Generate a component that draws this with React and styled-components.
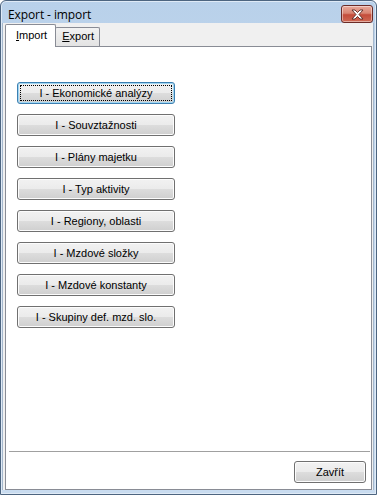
import React from 'react';
import styled, { createGlobalStyle } from 'styled-components';

const GlobalStyle = createGlobalStyle`
  html, body {
    margin: 0;
    padding: 0;
    background: #ffffff;
  }
  * {
    box-sizing: border-box;
  }
`;

const Window = styled.div`
  width: 377px;
  height: 495px;
  display: flex;
  flex-direction: column;
  border: 1px solid #4d6580;
  border-radius: 6px 6px 0 0;
  background: linear-gradient(to bottom, #b9d1ea 0%, #c4d8ee 40%, #c9dcf0 100%);
  padding: 0 2px 4px 1px;
  box-shadow: inset 0 0 0 1px #dfeaf6;
`;

const TitleBar = styled.div`
  height: 22px;
  display: flex;
  align-items: flex-start;
  padding-left: 6px;
  flex-shrink: 0;
`;

const Title = styled.div`
  font-family: "Open Sans", "Noto Sans", sans-serif;
  font-size: 12px;
  color: #000;
  margin-top: 5px;
  letter-spacing: -0.1px;
`;

const CloseButton = styled.div`
  margin-left: auto;
  margin-top: 4px;
  margin-right: 1px;
  width: 32px;
  height: 18px;
  border: 1px solid #6b2b26;
  border-radius: 3px;
  background: linear-gradient(to bottom, #e9a99a 0%, #d98572 45%, #c44c3a 55%, #cf6a55 100%);
  box-shadow: inset 0 0 0 1px rgba(255, 255, 255, 0.45);
  display: flex;
  align-items: center;
  justify-content: center;
`;

const Client = styled.div`
  flex: 1;
  background: #f0f0f0;
  display: flex;
  flex-direction: column;
  padding: 1px 1px 0 2px;
  border: 1px solid #a4b7cc;
  border-top: none;
  border-bottom: none;
`;

const TabStrip = styled.div`
  display: flex;
  align-items: flex-end;
  height: 22px;
  position: relative;
  z-index: 1;
`;

const Tab = styled.div`
  font-family: "Liberation Sans", Arial, sans-serif;
  font-size: 11px;
  color: #000;
  border: 1px solid #898c95;
  border-bottom: none;
  height: ${p => (p.active ? '23px' : '19px')};
  margin-bottom: ${p => (p.active ? '-1px' : '0')};
  padding: ${p => (p.active ? '4px 8px 0 10px' : '2px 5px 0 6px')};
  background: ${p => (p.active ? '#ffffff' : 'linear-gradient(to bottom, #f2f2f2, #e3e3e3)')};
  margin-left: ${p => (p.active ? '0' : '-1px')};
  border-radius: 2px 2px 0 0;
`;

const Panel = styled.div`
  flex: 1;
  background: #ffffff;
  border: 1px solid #898c95;
  display: flex;
  flex-direction: column;
  padding: 35px 0 6px 0;
`;

const ButtonList = styled.div`
  display: flex;
  flex-direction: column;
  gap: 10px;
  padding-left: 11px;
`;

const Button = styled.div`
  width: ${p => p.width || 158}px;
  height: 22px;
  border: 1px solid ${p => (p.focused ? '#3c7fb1' : '#707070')};
  border-radius: 3px;
  background: linear-gradient(to bottom, #f2f2f2 0%, #ebebeb 50%, #dddddd 50%, #cfcfcf 100%);
  box-shadow: ${p => (p.focused ? 'inset 0 0 0 1px #9fd6f3' : 'inset 0 0 0 1px #fcfcfc')};
  font-family: "Liberation Sans", Arial, sans-serif;
  font-size: 11px;
  color: #000;
  display: flex;
  align-items: center;
  justify-content: center;
  position: relative;
  &::after {
    content: '';
    display: ${p => (p.focused ? 'block' : 'none')};
    position: absolute;
    inset: 2px;
    border: 1px dotted #000;
  }
`;

const Spacer = styled.div`
  flex: 1;
`;

const Separator = styled.div`
  height: 1px;
  background: #a0a0a0;
  margin: 0 1px 0 3px;
`;

const Footer = styled.div`
  display: flex;
  justify-content: flex-end;
  padding: 9px 5px 0 0;
`;

const buttons = [
  'I - Ekonomické analýzy',
  'I - Souvztažnosti',
  'I - Plány majetku',
  'I - Typ aktivity',
  'I - Regiony, oblasti',
  'I - Mzdové složky',
  'I - Mzdové konstanty',
  'I - Skupiny def. mzd. slo.',
];

function CloseIcon() {
  return (
    <svg width="13" height="11" viewBox="0 0 13 11">
      <path
        d="M1 1 H4 L6.5 3.5 L9 1 H12 L8 5.5 L12 10 H9 L6.5 7.5 L4 10 H1 L5 5.5 Z"
        fill="#ffffff"
        stroke="#5a2a25"
        strokeWidth="0.9"
        strokeLinejoin="round"
      />
    </svg>
  );
}

export default function App() {
  return (
    <>
      <GlobalStyle />
      <Window>
        <TitleBar>
          <Title>Export - import</Title>
          <CloseButton>
            <CloseIcon />
          </CloseButton>
        </TitleBar>
        <Client>
          <TabStrip>
            <Tab active>
              <u>I</u>mport
            </Tab>
            <Tab>
              <u>E</u>xport
            </Tab>
          </TabStrip>
          <Panel>
            <ButtonList>
              {buttons.map((label, i) => (
                <Button key={label} focused={i === 0}>
                  {label}
                </Button>
              ))}
            </ButtonList>
            <Spacer />
            <Separator />
            <Footer>
              <Button width={72}>Zavřít</Button>
            </Footer>
          </Panel>
        </Client>
      </Window>
    </>
  );
}
